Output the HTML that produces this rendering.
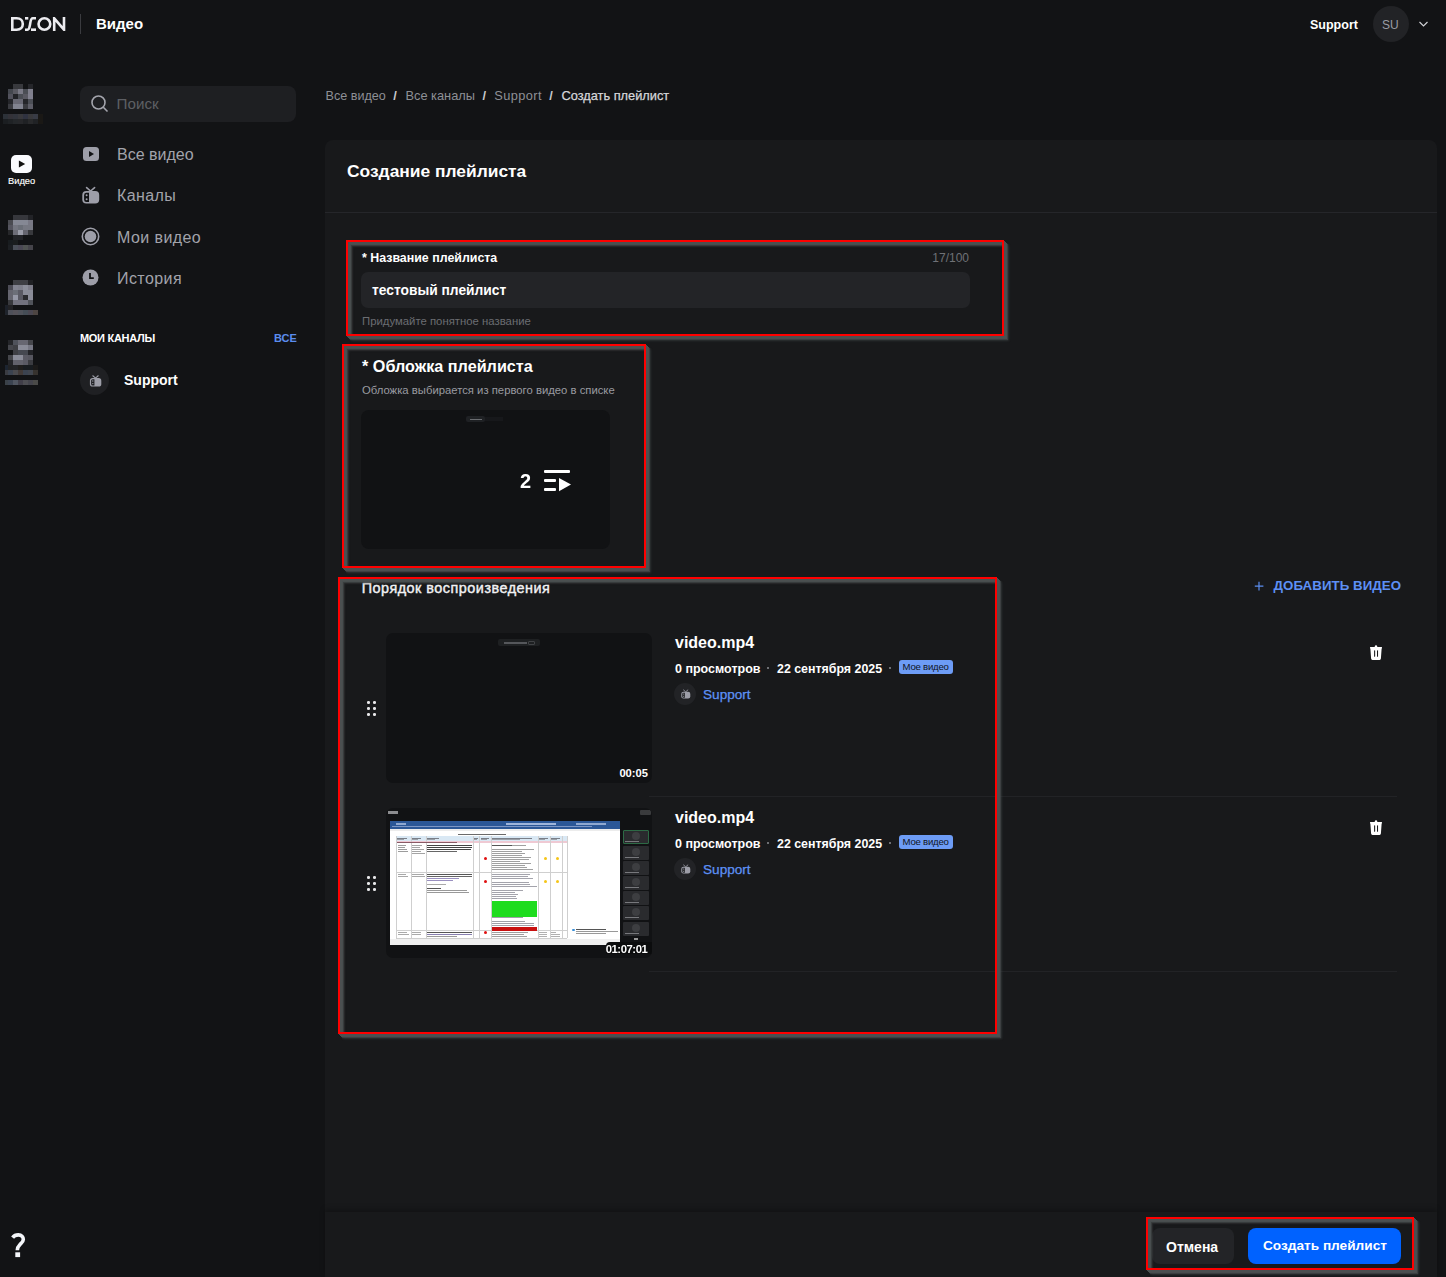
<!DOCTYPE html>
<html><head><meta charset="utf-8">
<style>
*{box-sizing:border-box;margin:0;padding:0}
html,body{width:1446px;height:1277px;overflow:hidden;background:#121315;font-family:"Liberation Sans",sans-serif;color:#fff}
.a{position:absolute}
.t{position:absolute;white-space:nowrap;line-height:1}
.card{position:absolute;left:325px;top:140px;width:1112px;height:1150px;background:#18191b;border-radius:8px 8px 0 0}
.rail{position:absolute;left:1437px;top:140px;width:9px;height:1137px;background:#151618}
.rb{position:absolute;z-index:10;border:2px solid #ff0000;box-shadow:inset 1px 1px 0 rgb(75,80,81),inset 2px 2px 0 rgb(75,80,81),inset 3px 3px 0.5px rgba(75,80,81,.85),inset 4px 4px 1px rgba(75,80,81,.55),inset 5px 5px 1.5px rgba(75,80,81,.3),1px 1px 0 rgb(75,80,81),2px 2px 0 rgb(75,80,81),3px 3px 0.5px rgba(75,80,81,.9),4px 4px 1px rgba(75,80,81,.6),5px 5px 2px rgba(75,80,81,.35)}
.pix{position:absolute}
.pix i{position:absolute;display:block}
</style></head><body>

<!-- header -->
<svg class="a" style="left:11px;top:17px" width="56" height="14" viewBox="0 0 56 14"><g fill="none" stroke="#ececf0" stroke-width="2.6"><path d="M1.3 1.3 H5.7 C9.6 1.3 11.8 3.8 11.8 7 C11.8 10.2 9.6 12.7 5.7 12.7 H1.3 Z"/><path d="M14 1.3 H17.3"/><path d="M25 1.3 H21.8 C19.8 1.3 19.6 4 19.1 7 C18.6 10 18.4 12.7 16.4 12.7 H14"/><path d="M20 12.7 H25"/><ellipse cx="33.4" cy="7" rx="5.85" ry="5.7"/><path d="M43.2 14 V1.3 L53 12.7 V0"/></g></svg>
<div class="a" style="left:80px;top:14px;width:1px;height:20px;background:#3a3b3f"></div>
<div class="t" style="left:96px;top:16px;font-size:15px;font-weight:700">Видео</div>
<div class="t" style="left:1310px;top:19px;font-size:12.5px;font-weight:700">Support</div>
<div class="a" style="left:1373px;top:6px;width:36px;height:36px;border-radius:50%;background:#222326"></div>
<div class="t" style="left:1382px;top:19px;font-size:12px;color:#9a9ca4">SU</div>
<svg class="a" style="left:1418px;top:20px" width="11" height="8" viewBox="0 0 11 8"><path d="M1.5 2 L5.5 6 L9.5 2" fill="none" stroke="#cfd0d4" stroke-width="1.2"/></svg>

<!-- left rail -->
<div class="pix" style="left:0;top:0;filter:blur(0.4px)"><i style="left:13px;top:84px;width:5px;height:5px;background:#38393d"></i><i style="left:18px;top:84px;width:5px;height:5px;background:#38393d"></i><i style="left:28px;top:84px;width:5px;height:5px;background:#25262a"></i><i style="left:8px;top:89px;width:5px;height:5px;background:#44474e"></i><i style="left:13px;top:89px;width:5px;height:5px;background:#5a5a62"></i><i style="left:18px;top:89px;width:5px;height:5px;background:#7a7a86"></i><i style="left:23px;top:89px;width:5px;height:5px;background:#4b4e55"></i><i style="left:28px;top:89px;width:5px;height:5px;background:#7f7f8c"></i><i style="left:8px;top:94px;width:5px;height:5px;background:#52525c"></i><i style="left:13px;top:94px;width:5px;height:5px;background:#222327"></i><i style="left:18px;top:94px;width:5px;height:5px;background:#4a4d54"></i><i style="left:23px;top:94px;width:5px;height:5px;background:#595962"></i><i style="left:28px;top:94px;width:5px;height:5px;background:#80808e"></i><i style="left:8px;top:99px;width:5px;height:5px;background:#25262a"></i><i style="left:13px;top:99px;width:5px;height:5px;background:#696974"></i><i style="left:18px;top:99px;width:5px;height:5px;background:#696974"></i><i style="left:23px;top:99px;width:5px;height:5px;background:#25262a"></i><i style="left:28px;top:99px;width:5px;height:5px;background:#4c4f56"></i><i style="left:8px;top:104px;width:5px;height:5px;background:#3a3b40"></i><i style="left:13px;top:104px;width:5px;height:5px;background:#81838f"></i><i style="left:18px;top:104px;width:5px;height:5px;background:#81838f"></i><i style="left:23px;top:104px;width:5px;height:5px;background:#3a3b40"></i><i style="left:28px;top:104px;width:5px;height:5px;background:#5e5e68"></i><i style="left:13px;top:215px;width:5px;height:5px;background:#36373c"></i><i style="left:18px;top:215px;width:5px;height:5px;background:#36373c"></i><i style="left:23px;top:215px;width:5px;height:5px;background:#36373c"></i><i style="left:28px;top:215px;width:5px;height:5px;background:#222327"></i><i style="left:8px;top:220px;width:5px;height:5px;background:#4a4b51"></i><i style="left:13px;top:220px;width:5px;height:5px;background:#858894"></i><i style="left:18px;top:220px;width:5px;height:5px;background:#858894"></i><i style="left:23px;top:220px;width:5px;height:5px;background:#858894"></i><i style="left:28px;top:220px;width:5px;height:5px;background:#787884"></i><i style="left:8px;top:225px;width:5px;height:5px;background:#55555f"></i><i style="left:13px;top:225px;width:5px;height:5px;background:#747680"></i><i style="left:18px;top:225px;width:5px;height:5px;background:#6b6f78"></i><i style="left:23px;top:225px;width:5px;height:5px;background:#767882"></i><i style="left:28px;top:225px;width:5px;height:5px;background:#767882"></i><i style="left:8px;top:230px;width:5px;height:5px;background:#26272a"></i><i style="left:13px;top:230px;width:5px;height:5px;background:#6e6e78"></i><i style="left:18px;top:230px;width:5px;height:5px;background:#9a9ca8"></i><i style="left:23px;top:230px;width:5px;height:5px;background:#64646e"></i><i style="left:28px;top:230px;width:5px;height:5px;background:#38393d"></i><i style="left:13px;top:235px;width:5px;height:5px;background:#222327"></i><i style="left:18px;top:235px;width:5px;height:5px;background:#222327"></i><i style="left:8px;top:240px;width:5px;height:5px;background:#181c1f"></i><i style="left:13px;top:240px;width:5px;height:5px;background:#1a1d1e"></i><i style="left:8px;top:245px;width:5px;height:5px;background:#1c1f23"></i><i style="left:13px;top:245px;width:5px;height:5px;background:#4a4f58"></i><i style="left:18px;top:245px;width:5px;height:5px;background:#4a4854"></i><i style="left:23px;top:245px;width:5px;height:5px;background:#505352"></i><i style="left:28px;top:245px;width:5px;height:5px;background:#45444a"></i><i style="left:13px;top:280px;width:5px;height:5px;background:#3e3f44"></i><i style="left:18px;top:280px;width:5px;height:5px;background:#3e3f44"></i><i style="left:23px;top:280px;width:5px;height:5px;background:#3e3f44"></i><i style="left:28px;top:280px;width:5px;height:5px;background:#1f2023"></i><i style="left:8px;top:285px;width:5px;height:5px;background:#4d4d57"></i><i style="left:13px;top:285px;width:5px;height:5px;background:#828390"></i><i style="left:18px;top:285px;width:5px;height:5px;background:#7e7f8b"></i><i style="left:23px;top:285px;width:5px;height:5px;background:#8b8d99"></i><i style="left:28px;top:285px;width:5px;height:5px;background:#7d7d89"></i><i style="left:8px;top:290px;width:5px;height:5px;background:#65656f"></i><i style="left:13px;top:290px;width:5px;height:5px;background:#6c6f78"></i><i style="left:18px;top:290px;width:5px;height:5px;background:#5a5a64"></i><i style="left:23px;top:290px;width:5px;height:5px;background:#8b8d99"></i><i style="left:28px;top:290px;width:5px;height:5px;background:#8a8c98"></i><i style="left:8px;top:295px;width:5px;height:5px;background:#65656f"></i><i style="left:13px;top:295px;width:5px;height:5px;background:#9698a6"></i><i style="left:18px;top:295px;width:5px;height:5px;background:#5a5a64"></i><i style="left:23px;top:295px;width:5px;height:5px;background:#2a2b2f"></i><i style="left:28px;top:295px;width:5px;height:5px;background:#8a8c98"></i><i style="left:8px;top:300px;width:5px;height:5px;background:#38393d"></i><i style="left:13px;top:300px;width:5px;height:5px;background:#72727e"></i><i style="left:18px;top:300px;width:5px;height:5px;background:#72727e"></i><i style="left:23px;top:300px;width:5px;height:5px;background:#72727e"></i><i style="left:28px;top:300px;width:5px;height:5px;background:#50535a"></i><i style="left:8px;top:340px;width:5px;height:5px;background:#25262a"></i><i style="left:13px;top:340px;width:5px;height:5px;background:#4f525b"></i><i style="left:18px;top:340px;width:5px;height:5px;background:#676771"></i><i style="left:23px;top:340px;width:5px;height:5px;background:#676771"></i><i style="left:28px;top:340px;width:5px;height:5px;background:#45464b"></i><i style="left:8px;top:345px;width:5px;height:5px;background:#45464c"></i><i style="left:13px;top:345px;width:5px;height:5px;background:#3e3f44"></i><i style="left:18px;top:345px;width:5px;height:5px;background:#8a8c98"></i><i style="left:23px;top:345px;width:5px;height:5px;background:#8a8c98"></i><i style="left:28px;top:345px;width:5px;height:5px;background:#767783"></i><i style="left:13px;top:350px;width:5px;height:5px;background:#3e3f44"></i><i style="left:18px;top:350px;width:5px;height:5px;background:#454850"></i><i style="left:23px;top:350px;width:5px;height:5px;background:#454850"></i><i style="left:28px;top:350px;width:5px;height:5px;background:#222327"></i><i style="left:8px;top:355px;width:5px;height:5px;background:#45464b"></i><i style="left:13px;top:355px;width:5px;height:5px;background:#8a8c98"></i><i style="left:18px;top:355px;width:5px;height:5px;background:#8a8c98"></i><i style="left:23px;top:355px;width:5px;height:5px;background:#5a5a64"></i><i style="left:28px;top:355px;width:5px;height:5px;background:#56565f"></i><i style="left:8px;top:360px;width:5px;height:5px;background:#25262a"></i><i style="left:13px;top:360px;width:5px;height:5px;background:#62626c"></i><i style="left:18px;top:360px;width:5px;height:5px;background:#62626c"></i><i style="left:23px;top:360px;width:5px;height:5px;background:#5a5a64"></i><i style="left:28px;top:360px;width:5px;height:5px;background:#3a3b40"></i><i style="left:3px;top:114px;width:5px;height:5px;background:#2c3138"></i><i style="left:8px;top:114px;width:5px;height:5px;background:#333238"></i><i style="left:13px;top:114px;width:5px;height:5px;background:#31343c"></i><i style="left:18px;top:114px;width:5px;height:5px;background:#38383c"></i><i style="left:23px;top:114px;width:5px;height:5px;background:#2f3240"></i><i style="left:28px;top:114px;width:5px;height:5px;background:#39393c"></i><i style="left:33px;top:114px;width:5px;height:5px;background:#383b45"></i><i style="left:38px;top:114px;width:5px;height:5px;background:#1a1815"></i><i style="left:3px;top:119px;width:5px;height:5px;background:#1b1e21"></i><i style="left:8px;top:119px;width:5px;height:5px;background:#1f2225"></i><i style="left:13px;top:119px;width:5px;height:5px;background:#24272a"></i><i style="left:18px;top:119px;width:5px;height:5px;background:#26272a"></i><i style="left:23px;top:119px;width:5px;height:5px;background:#1f2124"></i><i style="left:28px;top:119px;width:5px;height:5px;background:#28292b"></i><i style="left:33px;top:119px;width:5px;height:5px;background:#202225"></i><i style="left:38px;top:119px;width:5px;height:5px;background:#1a1815"></i><i style="left:5px;top:305px;width:3px;height:5px;background:#1c2028"></i><i style="left:8px;top:305px;width:5px;height:5px;background:#222225"></i><i style="left:5px;top:310px;width:3px;height:5px;background:#1f242c"></i><i style="left:8px;top:310px;width:5px;height:5px;background:#4e5059"></i><i style="left:13px;top:310px;width:5px;height:5px;background:#545259"></i><i style="left:18px;top:310px;width:5px;height:5px;background:#4f525a"></i><i style="left:23px;top:310px;width:5px;height:5px;background:#454d56"></i><i style="left:28px;top:310px;width:5px;height:5px;background:#4a4751"></i><i style="left:33px;top:310px;width:5px;height:5px;background:#4d4542"></i><i style="left:5px;top:365px;width:3px;height:5px;background:#1c2430"></i><i style="left:8px;top:365px;width:5px;height:5px;background:#212224"></i><i style="left:13px;top:365px;width:5px;height:5px;background:#232427"></i><i style="left:18px;top:365px;width:5px;height:5px;background:#1f1e1d"></i><i style="left:23px;top:365px;width:5px;height:5px;background:#181c20"></i><i style="left:28px;top:365px;width:5px;height:5px;background:#181c20"></i><i style="left:33px;top:365px;width:5px;height:5px;background:#1b1a19"></i><i style="left:5px;top:370px;width:3px;height:5px;background:#3a3c42"></i><i style="left:8px;top:370px;width:5px;height:5px;background:#3b4350"></i><i style="left:13px;top:370px;width:5px;height:5px;background:#4a4a4e"></i><i style="left:18px;top:370px;width:5px;height:5px;background:#413a38"></i><i style="left:23px;top:370px;width:5px;height:5px;background:#3b4350"></i><i style="left:28px;top:370px;width:5px;height:5px;background:#40454e"></i><i style="left:33px;top:370px;width:5px;height:5px;background:#36322e"></i><i style="left:5px;top:380px;width:3px;height:5px;background:#3a4148"></i><i style="left:8px;top:380px;width:5px;height:5px;background:#3b4350"></i><i style="left:13px;top:380px;width:5px;height:5px;background:#505560"></i><i style="left:18px;top:380px;width:5px;height:5px;background:#403e48"></i><i style="left:23px;top:380px;width:5px;height:5px;background:#4d4d52"></i><i style="left:28px;top:380px;width:5px;height:5px;background:#44444c"></i><i style="left:33px;top:380px;width:5px;height:5px;background:#4a4a48"></i></div>
<div class="a" style="left:10.8px;top:154.5px;width:21.4px;height:18px;border-radius:5px;background:#fafbfe"></div>
<svg class="a" style="left:11px;top:154.5px" width="21" height="18" viewBox="0 0 21 18"><path d="M7.9 5.6 L14.2 9.1 L7.9 12.6 Z" fill="#111"/></svg>
<div class="t" style="left:8px;top:177.3px;font-size:9.3px;color:#fff;-webkit-text-stroke:0.15px #fff">Видео</div>
<svg class="a" style="left:10px;top:1232px" width="18" height="27" viewBox="0 0 18 27"><path d="M2.6 5.6 C4.2 3.4 6.2 2.9 8.4 2.9 C11.6 2.9 13.3 4.9 13.3 7.4 C13.3 9.8 11.6 11 10 12.5 C8.5 14 7.3 15.2 7.3 18.2" fill="none" stroke="#f4f6fa" stroke-width="3.6"/><rect x="5.3" y="20.3" width="4.8" height="4.8" fill="#f4f6fa"/></svg>

<!-- nav -->
<div class="a" style="left:80px;top:86px;width:216px;height:36px;border-radius:8px;background:#1e1f22"></div>
<svg class="a" style="left:90px;top:94px" width="20" height="20" viewBox="0 0 20 20"><circle cx="8.5" cy="8.5" r="6.5" fill="none" stroke="#a4a5ad" stroke-width="1.6"/><path d="M13.3 13.3 L17.5 17.5" stroke="#a4a5ad" stroke-width="1.6"/></svg>
<div class="t" style="left:116.6px;top:96.2px;font-size:15.2px;color:#5d5f64">Поиск</div>

<!-- nav items -->
<svg class="a" style="left:82px;top:146px" width="18" height="16" viewBox="0 0 18 16"><rect x="1" y="1" width="16" height="14" rx="3.5" fill="#9d9ea8"/><path d="M7 5 L12 8 L7 11 Z" fill="#111214"/></svg>
<div class="t" style="left:117px;top:147px;font-size:16px;color:#a2a3ab">Все видео</div>
<svg class="a" style="left:78.00px;top:182.00px" width="26.00" height="26.00" viewBox="0 0 26 26"><path d="M8.6 5.6 L12.6 9 L16.6 5.6" stroke="#9d9ea8" stroke-width="1.6" stroke-linecap="round" fill="none"/><rect x="4.3" y="9" width="16.9" height="12.6" rx="4" fill="#9d9ea8"/><path d="M11 10.7 H8.4 Q6.1 10.7 6.1 13 V17.7 Q6.1 20 8.4 20 H11 Z" fill="#111214"/><circle cx="8.6" cy="13.3" r="1.0" fill="#9d9ea8"/><circle cx="8.6" cy="17.2" r="1.0" fill="#9d9ea8"/></svg>
<div class="t" style="left:117px;top:188px;font-size:16px;color:#a2a3ab;letter-spacing:0.4px">Каналы</div>
<svg class="a" style="left:81px;top:227px" width="19" height="19" viewBox="0 0 19 19"><circle cx="9.5" cy="9.5" r="8.2" fill="none" stroke="#9d9ea8" stroke-width="1.6"/><circle cx="9.5" cy="9.5" r="5.8" fill="#9d9ea8"/></svg>
<div class="t" style="left:117px;top:230px;font-size:16px;color:#a2a3ab;letter-spacing:0.42px">Мои видео</div>
<svg class="a" style="left:82px;top:269px" width="17" height="17" viewBox="0 0 17 17"><circle cx="8.5" cy="8.5" r="8" fill="#9d9ea8"/><path d="M8 4 L8 9.2 L11.8 9.2" fill="none" stroke="#111214" stroke-width="1.8"/></svg>
<div class="t" style="left:117px;top:271px;font-size:16px;color:#a2a3ab;letter-spacing:0.43px">История</div>

<div class="t" style="left:80px;top:333px;font-size:11px;font-weight:700;color:#fff;letter-spacing:-0.3px">МОИ КАНАЛЫ</div>
<div class="t" style="left:274px;top:333px;font-size:11px;font-weight:700;color:#5b8def">ВСЕ</div>
<div class="a" style="left:80px;top:366px;width:29px;height:29px;border-radius:50%;background:#1f2023"></div>
<svg class="a" style="left:86.60px;top:371.50px" width="17.55" height="17.55" viewBox="0 0 26 26"><path d="M8.6 5.6 L12.6 9 L16.6 5.6" stroke="#9d9ea8" stroke-width="1.6" stroke-linecap="round" fill="none"/><rect x="4.3" y="9" width="16.9" height="12.6" rx="4" fill="#9d9ea8"/><path d="M11 10.7 H8.4 Q6.1 10.7 6.1 13 V17.7 Q6.1 20 8.4 20 H11 Z" fill="#1f2023"/><circle cx="8.6" cy="13.3" r="1.0" fill="#9d9ea8"/><circle cx="8.6" cy="17.2" r="1.0" fill="#9d9ea8"/></svg>
<div class="t" style="left:124px;top:373px;font-size:14px;font-weight:700;color:#fff">Support</div>

<!-- breadcrumb -->
<div class="t" style="left:325.6px;top:89.9px;font-size:12.6px;color:#8e9096">Все видео</div>
<div class="t" style="left:393.3px;top:89.9px;font-size:12.8px;font-weight:700;color:#c8c9cc">/</div>
<div class="t" style="left:405.5px;top:89.9px;font-size:12.8px;color:#8e9096">Все каналы</div>
<div class="t" style="left:482.6px;top:89.9px;font-size:12.8px;font-weight:700;color:#c8c9cc">/</div>
<div class="t" style="left:494.3px;top:89.9px;font-size:12.8px;color:#8e9096;letter-spacing:0.4px">Support</div>
<div class="t" style="left:549.2px;top:89.9px;font-size:12.8px;font-weight:700;color:#c8c9cc">/</div>
<div class="t" style="left:561.5px;top:89.9px;font-size:12.8px;color:#d6d7da;-webkit-text-stroke:0.25px #d6d7da">Создать плейлист</div>
<!-- card -->
<div class="card"></div>

<div class="t" style="left:347px;top:163px;font-size:17.4px;font-weight:700">Создание плейлиста</div>
<div class="a" style="left:325px;top:212px;width:1112px;height:1px;background:#25262a"></div>

<!-- section 1 -->
<div class="rb" style="left:346px;top:240px;width:658px;height:96px"></div>
<div class="t" style="left:362px;top:252.3px;font-size:12.4px;font-weight:700">* Название плейлиста</div>
<div class="t" style="left:932px;top:252px;width:37px;text-align:right;font-size:12px;color:#6f7176">17/100</div>
<div class="a" style="left:361px;top:272px;width:609px;height:36px;border-radius:7px;background:#232427"></div>
<div class="t" style="left:372px;top:283.5px;font-size:13.8px;font-weight:700">тестовый плейлист</div>
<div class="t" style="left:362px;top:316.3px;font-size:11.35px;color:#6b6d72">Придумайте понятное название</div>

<!-- section 2 -->
<div class="rb" style="left:342px;top:344px;width:304px;height:224px"></div>
<div class="t" style="left:362px;top:358.3px;font-size:16.2px;font-weight:700">* Обложка плейлиста</div>
<div class="t" style="left:362px;top:384.6px;font-size:11.3px;color:#9a9ba1">Обложка выбирается из первого видео в списке</div>
<div class="a" style="left:361px;top:410px;width:249px;height:139px;border-radius:8px;background:#111214"></div>
<div class="a" style="left:466px;top:416px;width:19px;height:6px;border-radius:2px;background:#1f2124"></div>
<div class="a" style="left:485px;top:417px;width:18px;height:4px;background:#17181b"></div><div class="a" style="left:470px;top:418.5px;width:12px;height:1.2px;background:#6a6c70;filter:blur(0.3px)"></div>
<div class="t" style="left:520.2px;top:470.3px;font-size:21px;font-weight:700;transform:scaleX(0.95);transform-origin:left">2</div>
<svg class="a" style="left:543px;top:469px" width="30" height="24" viewBox="0 0 30 24"><rect x="1" y="1" width="26" height="3" rx="1" fill="#fff"/><rect x="1" y="10" width="12" height="3" rx="1" fill="#fff"/><rect x="1" y="19" width="12" height="3" rx="1" fill="#fff"/><path d="M16 9 L28 15.5 L16 22.2 Z" fill="#fff"/></svg>

<!-- section 3 -->
<div class="rb" style="left:338px;top:577px;width:659px;height:457px"></div>
<div class="t" style="left:361.7px;top:581.3px;font-size:14.4px;font-weight:400;color:#f2f2f4;letter-spacing:0.5px;-webkit-text-stroke:0.4px #f2f2f4">Порядок воспроизведения</div>
<svg class="a" style="left:1254px;top:581px" width="10" height="10" viewBox="0 0 10 10"><path d="M5 0.8 V9.6 M0.8 5.2 H9.4" stroke="#5b8def" stroke-width="1.2"/></svg>
<div class="t" style="left:1273.6px;top:579.4px;font-size:13.3px;font-weight:700;color:#5d90f5;letter-spacing:0.05px">ДОБАВИТЬ ВИДЕО</div>

<!--VID--><div class="a" style="left:367px;top:701px;width:2.6px;height:2.6px;border-radius:50%;background:#e8e8ea"></div>
<div class="a" style="left:367px;top:707px;width:2.6px;height:2.6px;border-radius:50%;background:#e8e8ea"></div>
<div class="a" style="left:367px;top:713px;width:2.6px;height:2.6px;border-radius:50%;background:#e8e8ea"></div>
<div class="a" style="left:373px;top:701px;width:2.6px;height:2.6px;border-radius:50%;background:#e8e8ea"></div>
<div class="a" style="left:373px;top:707px;width:2.6px;height:2.6px;border-radius:50%;background:#e8e8ea"></div>
<div class="a" style="left:373px;top:713px;width:2.6px;height:2.6px;border-radius:50%;background:#e8e8ea"></div>
<div class="a" style="left:386px;top:633px;width:266px;height:150px;border-radius:7px;background:#111214;overflow:hidden"><div class="a" style="left:112px;top:6px;width:42px;height:7px;border-radius:2px;background:#1e2022"></div>
<div class="a" style="left:118px;top:8.5px;width:23px;height:2px;background:#55575b;filter:blur(0.4px)"></div>
<div class="a" style="left:142px;top:7.5px;width:7px;height:4px;border:1px solid #404245;border-radius:1px"></div>
<div class="t" style="right:4px;top:135px;font-size:11.2px;font-weight:700;color:#fff">00:05</div></div>
<div class="t" style="left:675px;top:634.5px;font-size:16px;font-weight:700">video.mp4</div>
<div class="t" style="left:675px;top:662.5px;font-size:12.5px;font-weight:700">0 просмотров</div>
<div class="a" style="left:767px;top:667px;width:2px;height:2px;border-radius:50%;background:#8a8c92"></div>
<div class="t" style="left:777px;top:662.5px;font-size:12.4px;font-weight:700">22 сентября 2025</div>
<div class="a" style="left:889px;top:667px;width:2px;height:2px;border-radius:50%;background:#8a8c92"></div>
<div class="a" style="left:899px;top:660px;width:54px;height:14px;border-radius:3px;background:#6d9cf6"></div>
<div class="t" style="left:902.5px;top:661.9px;font-size:9.6px;color:#10141b;letter-spacing:-0.22px">Мое видео</div>
<div class="a" style="left:674px;top:683px;width:22px;height:22px;border-radius:50%;background:#222326"></div>
<svg class="a" style="left:678.70px;top:687.10px" width="13.86" height="13.86" viewBox="0 0 26 26"><path d="M8.6 5.6 L12.6 9 L16.6 5.6" stroke="#9d9ea8" stroke-width="1.6" stroke-linecap="round" fill="none"/><rect x="4.3" y="9" width="16.9" height="12.6" rx="4" fill="#9d9ea8"/><path d="M11 10.7 H8.4 Q6.1 10.7 6.1 13 V17.7 Q6.1 20 8.4 20 H11 Z" fill="#222326"/><circle cx="8.6" cy="13.3" r="1.0" fill="#9d9ea8"/><circle cx="8.6" cy="17.2" r="1.0" fill="#9d9ea8"/></svg>
<div class="t" style="left:703px;top:687.8px;font-size:13.6px;color:#5e92f6;-webkit-text-stroke:0.25px #5e92f6">Support</div>
<svg class="a" style="left:1369px;top:644px" width="14" height="17" viewBox="0 0 14 17"><circle cx="7" cy="2.4" r="1.2" fill="#fff"/><path d="M1 2.9 H13 L12.7 4.9 H12.6 L11.9 14.6 Q11.8 15.9 10.6 15.9 H3.4 Q2.2 15.9 2.1 14.6 L1.4 4.9 H1.3 Z" fill="#fff"/><rect x="5.1" y="6.2" width="1.05" height="6.6" rx="0.5" fill="#18191b"/><rect x="8" y="6.2" width="1.05" height="6.6" rx="0.5" fill="#18191b"/></svg>
<div class="a" style="left:649px;top:796px;width:748px;height:1px;background:#222326"></div>
<div class="a" style="left:367px;top:876px;width:2.6px;height:2.6px;border-radius:50%;background:#e8e8ea"></div>
<div class="a" style="left:367px;top:882px;width:2.6px;height:2.6px;border-radius:50%;background:#e8e8ea"></div>
<div class="a" style="left:367px;top:888px;width:2.6px;height:2.6px;border-radius:50%;background:#e8e8ea"></div>
<div class="a" style="left:373px;top:876px;width:2.6px;height:2.6px;border-radius:50%;background:#e8e8ea"></div>
<div class="a" style="left:373px;top:882px;width:2.6px;height:2.6px;border-radius:50%;background:#e8e8ea"></div>
<div class="a" style="left:373px;top:888px;width:2.6px;height:2.6px;border-radius:50%;background:#e8e8ea"></div>
<div class="a" style="left:386px;top:808px;width:266px;height:150px;border-radius:7px;background:#111214;overflow:hidden"><div class="a" style="left:0;top:0;width:266px;height:150px;filter:blur(0.5px)"><div class="a" style="left:2px;top:3px;width:10px;height:3px;background:#8c8d90;"></div>
<div class="a" style="left:254px;top:2px;width:11px;height:5px;background:#3a3b3d;border-radius:1px"></div>
<div class="a" style="left:4px;top:12.5px;width:230px;height:124px;background:#ffffff;"></div>
<div class="a" style="left:4px;top:12.5px;width:230px;height:8px;background:#2b5797;"></div>
<div class="a" style="left:10px;top:14.5px;width:10px;height:2px;background:#8fa8d0;"></div>
<div class="a" style="left:120px;top:14.5px;width:50px;height:2px;background:#9fb5da;"></div>
<div class="a" style="left:190px;top:14.5px;width:30px;height:2px;background:#8fa8d0;"></div>
<div class="a" style="left:6px;top:18px;width:200px;height:1.2px;background:#7d96c4;"></div>
<div class="a" style="left:4px;top:20.5px;width:230px;height:2.5px;background:#ececec;"></div>
<div class="a" style="left:10px;top:28px;width:171px;height:5px;background:#d9e8f4;"></div>
<div class="a" style="left:10px;top:33px;width:171px;height:2.3px;background:#efc9d3;"></div>
<div class="a" style="left:10px;top:28px;width:0.8px;height:102px;background:#cfcfcf;"></div>
<div class="a" style="left:24.7px;top:28px;width:0.8px;height:102px;background:#cfcfcf;"></div>
<div class="a" style="left:39.6px;top:28px;width:0.8px;height:102px;background:#cfcfcf;"></div>
<div class="a" style="left:86.8px;top:28px;width:0.8px;height:102px;background:#cfcfcf;"></div>
<div class="a" style="left:93.3px;top:28px;width:0.8px;height:102px;background:#cfcfcf;"></div>
<div class="a" style="left:104.5px;top:28px;width:0.8px;height:102px;background:#cfcfcf;"></div>
<div class="a" style="left:152.2px;top:28px;width:0.8px;height:102px;background:#cfcfcf;"></div>
<div class="a" style="left:164.3px;top:28px;width:0.8px;height:102px;background:#cfcfcf;"></div>
<div class="a" style="left:176.4px;top:28px;width:0.8px;height:102px;background:#cfcfcf;"></div>
<div class="a" style="left:181px;top:28px;width:0.8px;height:102px;background:#cfcfcf;"></div>
<div class="a" style="left:10px;top:64.2px;width:171px;height:0.8px;background:#cfcfcf;"></div>
<div class="a" style="left:10px;top:122.4px;width:171px;height:0.8px;background:#cfcfcf;"></div>
<div class="a" style="left:10px;top:130px;width:171px;height:0.8px;background:#cfcfcf;"></div>
<div class="a" style="left:72px;top:25.6px;width:48px;height:1px;background:#6a6a6a;"></div>
<div class="a" style="left:11px;top:29.5px;width:10px;height:0.9px;background:#7a7f88;"></div>
<div class="a" style="left:11px;top:31.2px;width:7.0px;height:0.7px;background:#9aa0a8;"></div>
<div class="a" style="left:26px;top:29.5px;width:9px;height:0.9px;background:#7a7f88;"></div>
<div class="a" style="left:26px;top:31.2px;width:6.3px;height:0.7px;background:#9aa0a8;"></div>
<div class="a" style="left:41px;top:29.5px;width:12px;height:0.9px;background:#7a7f88;"></div>
<div class="a" style="left:41px;top:31.2px;width:8.399999999999999px;height:0.7px;background:#9aa0a8;"></div>
<div class="a" style="left:88px;top:29.5px;width:4px;height:0.9px;background:#7a7f88;"></div>
<div class="a" style="left:88px;top:31.2px;width:2.8px;height:0.7px;background:#9aa0a8;"></div>
<div class="a" style="left:95px;top:29.5px;width:8px;height:0.9px;background:#7a7f88;"></div>
<div class="a" style="left:95px;top:31.2px;width:5.6px;height:0.7px;background:#9aa0a8;"></div>
<div class="a" style="left:106px;top:29.5px;width:40px;height:0.9px;background:#7a7f88;"></div>
<div class="a" style="left:106px;top:31.2px;width:28.0px;height:0.7px;background:#9aa0a8;"></div>
<div class="a" style="left:153px;top:29.5px;width:9px;height:0.9px;background:#7a7f88;"></div>
<div class="a" style="left:153px;top:31.2px;width:6.3px;height:0.7px;background:#9aa0a8;"></div>
<div class="a" style="left:165px;top:29.5px;width:9px;height:0.9px;background:#7a7f88;"></div>
<div class="a" style="left:165px;top:31.2px;width:6.3px;height:0.7px;background:#9aa0a8;"></div>
<div class="a" style="left:11px;top:33.6px;width:60px;height:0.9px;background:#8a5a66;"></div>
<div class="a" style="left:11.5px;top:36.5px;width:8.254245869622508px;height:0.75px;background:#9c9c9c;"></div>
<div class="a" style="left:11.5px;top:38.5px;width:7.862181433337713px;height:0.75px;background:#9c9c9c;"></div>
<div class="a" style="left:11.5px;top:40.5px;width:9.328444584562929px;height:0.75px;background:#9c9c9c;"></div>
<div class="a" style="left:11.5px;top:42.5px;width:10.037178665947101px;height:0.75px;background:#9c9c9c;"></div>
<div class="a" style="left:26px;top:36.5px;width:10.054957555044407px;height:0.75px;background:#a4a4a4;"></div>
<div class="a" style="left:26px;top:38.5px;width:8.271707669388098px;height:0.75px;background:#a4a4a4;"></div>
<div class="a" style="left:26px;top:40.5px;width:12.099631048294597px;height:0.75px;background:#a4a4a4;"></div>
<div class="a" style="left:26px;top:42.5px;width:8.960842615956476px;height:0.75px;background:#a4a4a4;"></div>
<div class="a" style="left:26px;top:44.5px;width:12.72808650077643px;height:0.75px;background:#a4a4a4;"></div>
<div class="a" style="left:41px;top:36.6px;width:45px;height:0.9px;background:#444;"></div>
<div class="a" style="left:41px;top:38.6px;width:45px;height:0.9px;background:#444;"></div>
<div class="a" style="left:41px;top:40.6px;width:44px;height:0.9px;background:#444;"></div>
<div class="a" style="left:41px;top:42.6px;width:30px;height:0.8px;background:#666;"></div>
<div class="a" style="left:106px;top:36.5px;width:34.140248543714044px;height:0.75px;background:#a0a0a0;"></div>
<div class="a" style="left:106px;top:40.5px;width:42.45243226287623px;height:0.75px;background:#a0a0a0;"></div>
<div class="a" style="left:106px;top:42.5px;width:29.596591500433874px;height:0.75px;background:#a0a0a0;"></div>
<div class="a" style="left:106px;top:44.5px;width:32.55267283383482px;height:0.75px;background:#a0a0a0;"></div>
<div class="a" style="left:106px;top:46.5px;width:30.253074838630873px;height:0.75px;background:#a0a0a0;"></div>
<div class="a" style="left:106px;top:48.5px;width:38.500442440671314px;height:0.75px;background:#a0a0a0;"></div>
<div class="a" style="left:106px;top:50.5px;width:36.85940038277204px;height:0.75px;background:#a0a0a0;"></div>
<div class="a" style="left:106px;top:52.5px;width:28.072821059392187px;height:0.75px;background:#a0a0a0;"></div>
<div class="a" style="left:106px;top:54.5px;width:39.24719951727214px;height:0.75px;background:#a0a0a0;"></div>
<div class="a" style="left:106px;top:56.5px;width:32.65464906678225px;height:0.75px;background:#a0a0a0;"></div>
<div class="a" style="left:106px;top:58.5px;width:35.15731877467396px;height:0.75px;background:#a0a0a0;"></div>
<div class="a" style="left:106px;top:60.5px;width:41.298830667404836px;height:0.75px;background:#a0a0a0;"></div>
<div class="a" style="left:106px;top:37.2px;width:20px;height:0.9px;background:#555;"></div>
<div class="a" style="left:11.5px;top:66px;width:8.720482553610765px;height:0.75px;background:#a8a8a8;"></div>
<div class="a" style="left:11.5px;top:68px;width:10.125982519057256px;height:0.75px;background:#a8a8a8;"></div>
<div class="a" style="left:26px;top:66px;width:11.593115505083931px;height:0.75px;background:#a8a8a8;"></div>
<div class="a" style="left:26px;top:68px;width:12.896909206961428px;height:0.75px;background:#a8a8a8;"></div>
<div class="a" style="left:41px;top:66.3px;width:45px;height:0.9px;background:#555;"></div>
<div class="a" style="left:41px;top:68.3px;width:45px;height:0.9px;background:#666;"></div>
<div class="a" style="left:41px;top:70.3px;width:31.907763490167614px;height:0.75px;background:#9a90c0;"></div>
<div class="a" style="left:41px;top:72.3px;width:25.91965202986136px;height:0.75px;background:#9a90c0;"></div>
<div class="a" style="left:41px;top:76px;width:19.058595940280817px;height:0.75px;background:#aaa;"></div>
<div class="a" style="left:41px;top:79.5px;width:14px;height:0.9px;background:#555;"></div>
<div class="a" style="left:41px;top:81.5px;width:39.70284448978829px;height:0.75px;background:#999;"></div>
<div class="a" style="left:41px;top:83.5px;width:42.19825076619499px;height:0.75px;background:#999;"></div>
<div class="a" style="left:106px;top:66px;width:38.14414574115733px;height:0.75px;background:#a4a4ac;"></div>
<div class="a" style="left:106px;top:68px;width:35.54764209635608px;height:0.75px;background:#a4a4ac;"></div>
<div class="a" style="left:106px;top:70px;width:41.39927506153218px;height:0.75px;background:#a4a4ac;"></div>
<div class="a" style="left:106px;top:74px;width:37.44342462318018px;height:0.75px;background:#a4a4ac;"></div>
<div class="a" style="left:106px;top:76px;width:38.28357047934954px;height:0.75px;background:#a4a4ac;"></div>
<div class="a" style="left:106px;top:78px;width:44.84465863799927px;height:0.75px;background:#a4a4ac;"></div>
<div class="a" style="left:106px;top:82px;width:31.180307455050993px;height:0.75px;background:#a4a4ac;"></div>
<div class="a" style="left:106px;top:84px;width:23.007665881250745px;height:0.75px;background:#a4a4ac;"></div>
<div class="a" style="left:106px;top:86px;width:26.28108852539725px;height:0.75px;background:#a4a4ac;"></div>
<div class="a" style="left:106px;top:88px;width:23.826474434954488px;height:0.75px;background:#a4a4ac;"></div>
<div class="a" style="left:106px;top:90px;width:25.4101549954204px;height:0.75px;background:#a4a4ac;"></div>
<div class="a" style="left:106px;top:109px;width:31.296368320497614px;height:0.75px;background:#a0a0a8;"></div>
<div class="a" style="left:106px;top:113px;width:32.60671652135994px;height:0.75px;background:#a0a0a8;"></div>
<div class="a" style="left:106px;top:115px;width:42.376136094934026px;height:0.75px;background:#a0a0a8;"></div>
<div class="a" style="left:106px;top:117px;width:41.93965056821659px;height:0.75px;background:#a0a0a8;"></div>
<div class="a" style="left:11.5px;top:124px;width:9.576482586058493px;height:0.75px;background:#aaa;"></div>
<div class="a" style="left:11.5px;top:126px;width:11.920964135991085px;height:0.75px;background:#aaa;"></div>
<div class="a" style="left:26px;top:124px;width:8.584788710113767px;height:0.75px;background:#aaa;"></div>
<div class="a" style="left:26px;top:126px;width:9.006175707461585px;height:0.75px;background:#aaa;"></div>
<div class="a" style="left:41px;top:123.6px;width:45px;height:0.9px;background:#555;"></div>
<div class="a" style="left:41px;top:125.6px;width:45px;height:0.9px;background:#8880b0;"></div>
<div class="a" style="left:41px;top:127.6px;width:30px;height:0.8px;background:#999;"></div>
<div class="a" style="left:106px;top:124px;width:35.72932914614442px;height:0.75px;background:#a0a0a0;"></div>
<div class="a" style="left:106px;top:126px;width:31.729439147373686px;height:0.75px;background:#a0a0a0;"></div>
<div class="a" style="left:106px;top:128px;width:34.5410370202559px;height:0.75px;background:#a0a0a0;"></div>
<div class="a" style="left:153px;top:124px;width:7.83170611853196px;height:0.75px;background:#b0b0b0;"></div>
<div class="a" style="left:153px;top:126px;width:8.45246828567989px;height:0.75px;background:#b0b0b0;"></div>
<div class="a" style="left:153px;top:128px;width:8.087963747045638px;height:0.75px;background:#b0b0b0;"></div>
<div class="a" style="left:165px;top:124px;width:5.26996446611895px;height:0.75px;background:#b0b0b0;"></div>
<div class="a" style="left:165px;top:126px;width:8.899847453530365px;height:0.75px;background:#b0b0b0;"></div>
<div class="a" style="left:165px;top:128px;width:8.989365605982831px;height:0.75px;background:#b0b0b0;"></div>
<div class="a" style="left:97.5px;top:49.1px;width:3px;height:3px;background:#e01010;border-radius:50%"></div>
<div class="a" style="left:157.5px;top:49.1px;width:3px;height:3px;background:#f5c518;border-radius:50%"></div>
<div class="a" style="left:169.5px;top:49.1px;width:3px;height:3px;background:#f5c518;border-radius:50%"></div>
<div class="a" style="left:97.5px;top:72.2px;width:3px;height:3px;background:#e01010;border-radius:50%"></div>
<div class="a" style="left:157.5px;top:72.2px;width:3px;height:3px;background:#f5c518;border-radius:50%"></div>
<div class="a" style="left:169.5px;top:72.2px;width:3px;height:3px;background:#f5c518;border-radius:50%"></div>
<div class="a" style="left:97.5px;top:123px;width:3px;height:3px;background:#e01010;border-radius:50%"></div>
<div class="a" style="left:105.8px;top:92.5px;width:45.4px;height:16px;background:#1edc1e;"></div>
<div class="a" style="left:106px;top:119px;width:45px;height:3.8px;background:#c81010;"></div>
<div class="a" style="left:186px;top:120.5px;width:2.5px;height:2.5px;background:#3a8fd8;border-radius:50%"></div>
<div class="a" style="left:190px;top:120.5px;width:30px;height:1px;background:#555;"></div>
<div class="a" style="left:190px;top:123px;width:42px;height:1px;background:#999;"></div>
<div class="a" style="left:190px;top:125px;width:30px;height:1px;background:#999;"></div>
<div class="a" style="left:4px;top:131px;width:230px;height:5.5px;background:#f0f0f0;"></div>
<div class="a" style="left:237px;top:22.4px;width:26px;height:14px;background:#2a2b2e;border-radius:1px;border:1px solid #2d6a45;"></div>
<div class="a" style="left:245.5px;top:24.4px;width:8px;height:8px;background:#3d3e41;border-radius:50%"></div>
<div class="a" style="left:239px;top:33.4px;width:14px;height:1px;background:#77787c;"></div>
<div class="a" style="left:237px;top:37.599999999999994px;width:26px;height:14px;background:#2a2b2e;border-radius:1px;"></div>
<div class="a" style="left:245.5px;top:39.599999999999994px;width:8px;height:8px;background:#3d3e41;border-radius:50%"></div>
<div class="a" style="left:239px;top:48.599999999999994px;width:14px;height:1px;background:#77787c;"></div>
<div class="a" style="left:237px;top:52.8px;width:26px;height:14px;background:#2a2b2e;border-radius:1px;"></div>
<div class="a" style="left:245.5px;top:54.8px;width:8px;height:8px;background:#3d3e41;border-radius:50%"></div>
<div class="a" style="left:239px;top:63.8px;width:14px;height:1px;background:#77787c;"></div>
<div class="a" style="left:237px;top:68.0px;width:26px;height:14px;background:#2a2b2e;border-radius:1px;"></div>
<div class="a" style="left:245.5px;top:70.0px;width:8px;height:8px;background:#3d3e41;border-radius:50%"></div>
<div class="a" style="left:239px;top:79.0px;width:14px;height:1px;background:#77787c;"></div>
<div class="a" style="left:237px;top:83.19999999999999px;width:26px;height:14px;background:#2a2b2e;border-radius:1px;"></div>
<div class="a" style="left:245.5px;top:85.19999999999999px;width:8px;height:8px;background:#3d3e41;border-radius:50%"></div>
<div class="a" style="left:239px;top:94.19999999999999px;width:14px;height:1px;background:#77787c;"></div>
<div class="a" style="left:237px;top:98.4px;width:26px;height:14px;background:#2a2b2e;border-radius:1px;"></div>
<div class="a" style="left:245.5px;top:100.4px;width:8px;height:8px;background:#3d3e41;border-radius:50%"></div>
<div class="a" style="left:239px;top:109.4px;width:14px;height:1px;background:#77787c;"></div>
<div class="a" style="left:237px;top:113.6px;width:26px;height:14px;background:#2a2b2e;border-radius:1px;"></div>
<div class="a" style="left:245.5px;top:115.6px;width:8px;height:8px;background:#3d3e41;border-radius:50%"></div>
<div class="a" style="left:239px;top:124.6px;width:14px;height:1px;background:#77787c;"></div>
<div class="a" style="left:248px;top:130px;width:4px;height:1.5px;background:#999;"></div>
<div class="a" style="left:219.5px;top:134px;width:47px;height:12px;background:#0b0c0d;border-radius:4px 0 0 0"></div>
<div class="t" style="right:4.7px;top:135.5px;font-size:11.3px;font-weight:700;color:#fff;letter-spacing:-0.45px">01:07:01</div></div></div>
<div class="t" style="left:675px;top:809.5px;font-size:16px;font-weight:700">video.mp4</div>
<div class="t" style="left:675px;top:837.5px;font-size:12.5px;font-weight:700">0 просмотров</div>
<div class="a" style="left:767px;top:842px;width:2px;height:2px;border-radius:50%;background:#8a8c92"></div>
<div class="t" style="left:777px;top:837.5px;font-size:12.4px;font-weight:700">22 сентября 2025</div>
<div class="a" style="left:889px;top:842px;width:2px;height:2px;border-radius:50%;background:#8a8c92"></div>
<div class="a" style="left:899px;top:835px;width:54px;height:14px;border-radius:3px;background:#6d9cf6"></div>
<div class="t" style="left:902.5px;top:836.9px;font-size:9.6px;color:#10141b;letter-spacing:-0.22px">Мое видео</div>
<div class="a" style="left:674px;top:858px;width:22px;height:22px;border-radius:50%;background:#222326"></div>
<svg class="a" style="left:678.70px;top:862.10px" width="13.86" height="13.86" viewBox="0 0 26 26"><path d="M8.6 5.6 L12.6 9 L16.6 5.6" stroke="#9d9ea8" stroke-width="1.6" stroke-linecap="round" fill="none"/><rect x="4.3" y="9" width="16.9" height="12.6" rx="4" fill="#9d9ea8"/><path d="M11 10.7 H8.4 Q6.1 10.7 6.1 13 V17.7 Q6.1 20 8.4 20 H11 Z" fill="#222326"/><circle cx="8.6" cy="13.3" r="1.0" fill="#9d9ea8"/><circle cx="8.6" cy="17.2" r="1.0" fill="#9d9ea8"/></svg>
<div class="t" style="left:703px;top:862.8px;font-size:13.6px;color:#5e92f6;-webkit-text-stroke:0.25px #5e92f6">Support</div>
<svg class="a" style="left:1369px;top:819px" width="14" height="17" viewBox="0 0 14 17"><circle cx="7" cy="2.4" r="1.2" fill="#fff"/><path d="M1 2.9 H13 L12.7 4.9 H12.6 L11.9 14.6 Q11.8 15.9 10.6 15.9 H3.4 Q2.2 15.9 2.1 14.6 L1.4 4.9 H1.3 Z" fill="#fff"/><rect x="5.1" y="6.2" width="1.05" height="6.6" rx="0.5" fill="#18191b"/><rect x="8" y="6.2" width="1.05" height="6.6" rx="0.5" fill="#18191b"/></svg>
<div class="a" style="left:649px;top:971px;width:748px;height:1px;background:#222326"></div><!--/VID-->

<!-- footer -->
<div class="a" style="left:325px;top:1212px;width:1112px;height:65px;background:#18191b;box-shadow:0 -3px 5px rgba(0,0,0,0.25)"></div>
<div class="rb" style="left:1146px;top:1217px;width:268px;height:53px"></div>
<div class="a" style="left:1152px;top:1228px;width:82px;height:36px;border-radius:8px;background:#232427"></div>
<div class="t" style="left:1166px;top:1239.5px;font-size:14px;font-weight:700">Отмена</div>
<div class="a" style="left:1248px;top:1228px;width:153px;height:36px;border-radius:8px;background:#0062ff"></div>
<div class="t" style="left:1263px;top:1239.4px;font-size:13.65px;font-weight:700">Создать плейлист</div>

</body></html>
